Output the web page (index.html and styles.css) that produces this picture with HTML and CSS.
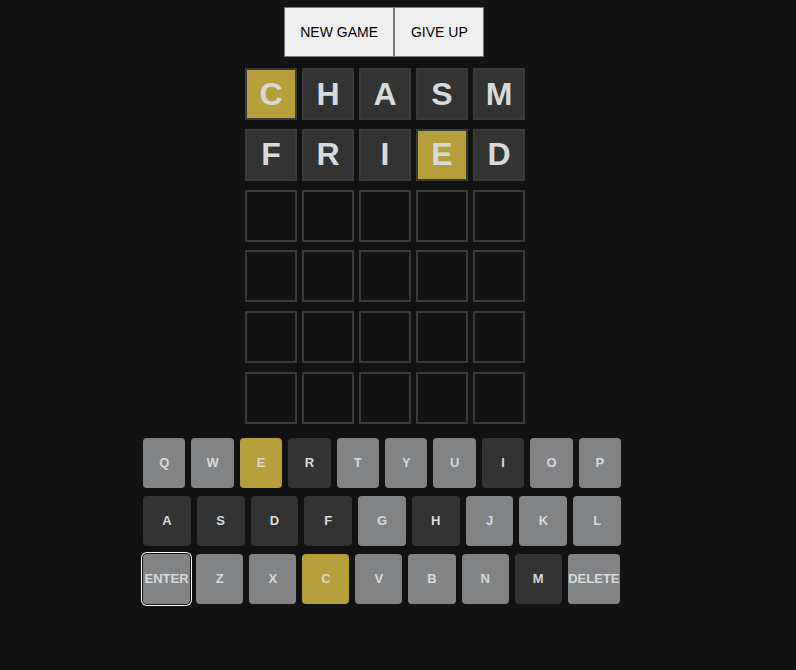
FILE: index.html
```html
<!DOCTYPE html>
<html>
<head>
<meta charset="utf-8">
<link rel="stylesheet" href="styles.css">
</head>
<body>
<div class="app">
  <div class="controls">
    <button class="btn">NEW GAME</button>
    <button class="btn">GIVE UP</button>
  </div>
  <div class="board">
    <div class="row">
      <div class="tile yellow">C</div><div class="tile filled">H</div><div class="tile filled">A</div><div class="tile filled">S</div><div class="tile filled">M</div>
    </div>
    <div class="row">
      <div class="tile filled">F</div><div class="tile filled">R</div><div class="tile filled">I</div><div class="tile yellow">E</div><div class="tile filled">D</div>
    </div>
    <div class="row"><div class="tile"></div><div class="tile"></div><div class="tile"></div><div class="tile"></div><div class="tile"></div></div>
    <div class="row"><div class="tile"></div><div class="tile"></div><div class="tile"></div><div class="tile"></div><div class="tile"></div></div>
    <div class="row"><div class="tile"></div><div class="tile"></div><div class="tile"></div><div class="tile"></div><div class="tile"></div></div>
    <div class="row"><div class="tile"></div><div class="tile"></div><div class="tile"></div><div class="tile"></div><div class="tile"></div></div>
  </div>
  <div class="keyboard">
    <div class="krow">
      <div class="key">Q</div><div class="key">W</div><div class="key present">E</div><div class="key absent">R</div><div class="key">T</div><div class="key">Y</div><div class="key">U</div><div class="key absent">I</div><div class="key">O</div><div class="key">P</div>
    </div>
    <div class="krow">
      <div class="key absent">A</div><div class="key absent">S</div><div class="key absent">D</div><div class="key absent">F</div><div class="key">G</div><div class="key absent">H</div><div class="key">J</div><div class="key">K</div><div class="key">L</div>
    </div>
    <div class="krow last">
      <div class="key focus">ENTER</div><div class="key">Z</div><div class="key">X</div><div class="key present">C</div><div class="key">V</div><div class="key">B</div><div class="key">N</div><div class="key absent">M</div><div class="key wide">DELETE</div>
    </div>
  </div>
</div>
</body>
</html>
```
FILE: styles.css
```css
html, body {
  margin: 0;
  padding: 0;
  background: #121212;
  height: 100%;
}
body {
  font-family: "Liberation Sans", Arial, sans-serif;
}
.app {
  width: 768px;
  display: flex;
  flex-direction: column;
  align-items: center;
}
.controls {
  display: flex;
  margin-top: 7px;
}
.btn {
  height: 50px;
  padding: 0 15.5px;
  background: #efefef;
  border: 1px solid #767676;
  color: #000;
  font-family: "Liberation Sans", Arial, sans-serif;
  font-size: 14px;
  margin: 0;
  border-radius: 0;
}
.board {
  margin-top: 11px;
  margin-left: 2px;
  display: flex;
  flex-direction: column;
  gap: 8.8px;
}
.row {
  display: flex;
  gap: 5px;
}
.tile {
  width: 52px;
  height: 52px;
  box-sizing: border-box;
  border: 2px solid #3a3a3a;
  display: flex;
  align-items: center;
  justify-content: center;
  font-size: 32px;
  font-weight: bold;
  color: #d7dadc;
}
.tile.filled {
  background: #333333;
}
.tile.yellow {
  background: #b59f3b;
}
.keyboard {
  margin-top: 14px;
  margin-right: 4px;
  width: 478px;
  display: flex;
  flex-direction: column;
  gap: 8px;
}
.krow {
  display: flex;
  gap: 6px;
}
.krow.last {
  padding-right: 1px;
}
.key {
  flex: 1 1 0;
  height: 50px;
  border-radius: 4px;
  background: #818384;
  color: #d7dadc;
  font-size: 13px;
  font-weight: bold;
  display: flex;
  align-items: center;
  justify-content: center;
  white-space: nowrap;
}
.key.wide {
  flex-grow: 1.11;
}
.key.absent {
  background: #333333;
}
.key.present {
  background: #b59f3b;
}
.key.focus {
  box-shadow: 0 0 0 1px #121212, 0 0 0 2px #ffffff;
}
```
